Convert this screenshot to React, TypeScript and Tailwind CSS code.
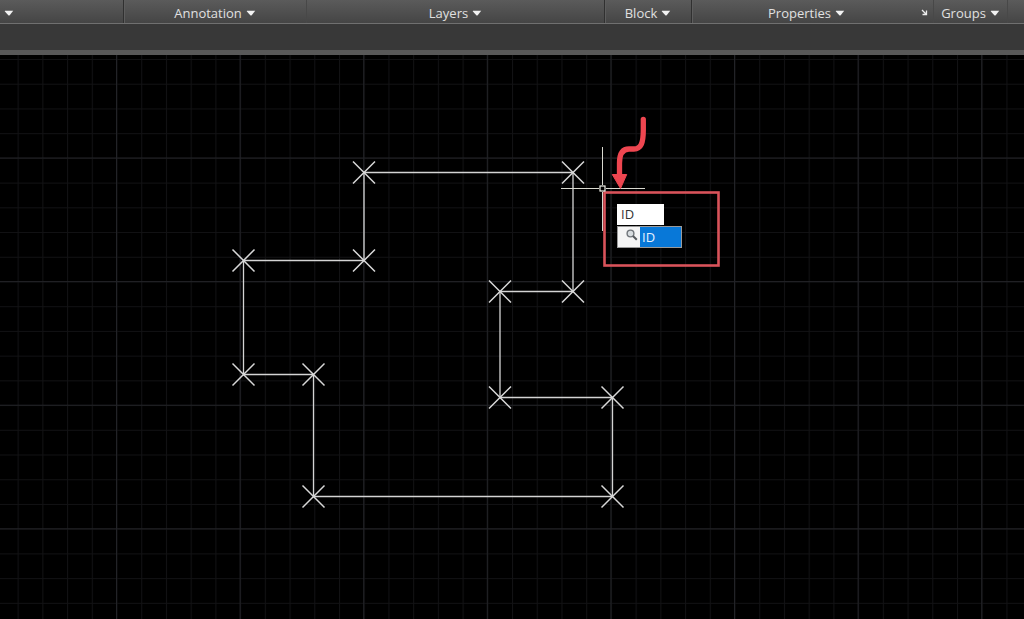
const GRID = 123.6;
const MINOR = GRID / 5;

const corners: [number, number][] = [
  [364, 172.5],
  [573, 172.5],
  [573, 291.5],
  [500, 291.5],
  [500, 397.5],
  [612.5, 397.5],
  [612.5, 496.5],
  [313.5, 496.5],
  [313.5, 374.5],
  [243.5, 374.5],
  [243.5, 260.5],
  [364, 260.5],
];

function Caret() {
  return (
    <svg viewBox="0 0 10 6" className="h-[6px] w-[10px] shrink-0" aria-hidden="true">
      <path d="M1 .8h8.200L5.700 5.200q-.7.7-1.400 0L.7 1.200Z" fill="#f2f2f2" />
    </svg>
  );
}

function PanelTitle({ label }: { label: string }) {
  return (
    <button type="button" className="flex h-full w-full items-center justify-center gap-1 pt-0.5">
      <span>{label}</span>
      <Caret />
    </button>
  );
}

const panel = "min-w-0 border-l border-[#303030] shadow-[inset_1px_0_0_#5d5d5d]";

function Ribbon() {
  return (
    <header className="shrink-0">
      <nav
        aria-label="Ribbon panels"
        className="grid h-6 grid-cols-[123fr_183fr_298fr_87fr_242fr_74fr_17fr] border-b border-[#707070] bg-linear-to-b from-[#5b5b5b] to-[#454545] text-[13px] leading-5 text-[#e0e0e0]"
      >
        <div>
          <button type="button" aria-label="Expand panel" className="flex h-full items-center pt-0.5 pl-1">
            <Caret />
          </button>
        </div>
        <div className={panel}>
          <PanelTitle label="Annotation" />
        </div>
        <div className="min-w-0 border-l border-[#484848]">
          <PanelTitle label="Layers" />
        </div>
        <div className={panel}>
          <PanelTitle label="Block" />
        </div>
        <div className={`${panel} flex`}>
          <PanelTitle label="Properties" />
          <button type="button" aria-label="Properties settings" className="flex w-3 shrink-0 items-center pt-0.5">
            <svg viewBox="0 0 7 7" className="h-[7px] w-[7px]" aria-hidden="true">
              <path d="M1 1l4 4M1.500 5.500h4v-4" fill="none" stroke="#eeeeee" strokeWidth="1.300" />
            </svg>
          </button>
        </div>
        <div className="min-w-0 border-l border-[#484848]">
          <PanelTitle label="Groups" />
        </div>
        <div className="border-l border-[#484848]" />
      </nav>
      <div className="h-[31px] border-b-5 border-[#595959] bg-[#383838]" />
    </header>
  );
}

function Drawing() {
  const outline = corners.map(([x, y]) => `${x},${y}`).join(" ");
  return (
    <svg className="absolute inset-0 h-full w-full" role="img" aria-label="Floor outline with point markers">
      <defs>
        <pattern id="minor" x="116.500" y="4" width={MINOR} height={MINOR} patternUnits="userSpaceOnUse">
          <path d={`M.5 0V${MINOR}M0 .5H${MINOR}`} stroke="#121214" />
        </pattern>
        <pattern id="major" x="116" y="102.500" width={GRID} height={GRID} patternUnits="userSpaceOnUse">
          <path d={`M.5 0V${GRID}M0 .5H${GRID}`} stroke="#222327" />
        </pattern>
      </defs>
      <rect width="100%" height="100%" fill="url(#minor)" />
      <rect width="100%" height="100%" fill="url(#major)" />
      <g transform="translate(0 -55)" fill="none">
        <polygon points={outline} stroke="#d4d4d4" strokeWidth="1.300" />
        {corners.map(([x, y]) => (
          <path
            key={`${x}-${y}`}
            d={`M${x - 11} ${y - 11}l22 22m0-22l-22 22`}
            stroke="#d8d8d8"
            strokeWidth="1.500"
          />
        ))}
        <path d="M602.500 147v38M602.500 192v39M561 188.500h38M606 188.500h39" stroke="#d9d9d0" />
        <rect x="604.500" y="192.500" width="114" height="73" stroke="#d9535a" strokeWidth="2.600" />
        <rect x="600" y="186" width="5" height="5" fill="#000000" stroke="#f0f0e8" strokeWidth="1.200" />
        <path
          d="M643.300 119.500V130C643.300 143 641 149 634 149H629C621.500 149 619.500 155 619.500 163V176"
          stroke="#ee4650"
          strokeWidth="5.300"
          strokeLinecap="round"
        />
        <path d="M612.300 174.500h14.400L620.500 188.500Z" fill="#ee4650" stroke="#ee4650" strokeLinejoin="round" />
      </g>
    </svg>
  );
}

function CommandInput() {
  return (
    <div className="absolute top-[149px] left-[617px] text-[13px] leading-5">
      <input
        aria-label="Command"
        defaultValue="ID"
        className="block h-[21px] w-[47px] bg-white pb-0.5 pl-1 font-[inherit] text-[#333333] outline-none"
      />
      <button type="button" className="mt-px flex h-[22px] w-[65px] border border-[#9a9a9a] bg-[#0878d8] text-left text-[#e5f2ff]">
        <span className="flex h-full w-[22px] shrink-0 items-center justify-end bg-[#f5f5f5] pr-0.5 pb-1">
          <svg viewBox="0 0 12 12" className="h-3 w-3" aria-hidden="true">
            <circle cx="4.500" cy="4.500" r="3.400" fill="#d8dde0" stroke="#70757a" strokeWidth="1.400" />
            <path d="M7 7l3.800 3.800" stroke="#55595d" strokeWidth="2" />
          </svg>
        </span>
        <span className="pl-0.5">ID</span>
      </button>
    </div>
  );
}

export default function App() {
  return (
    <div className="flex min-h-screen flex-col overflow-hidden bg-black font-['Open_Sans','Noto_Sans',sans-serif]">
      <Ribbon />
      <main className="relative flex-1">
        <Drawing />
        <CommandInput />
      </main>
    </div>
  );
}
